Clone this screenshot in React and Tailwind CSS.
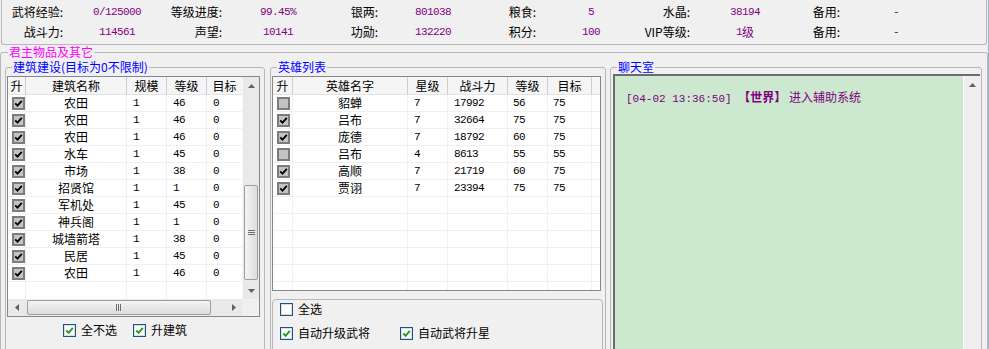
import React from "react";

const mono = "font-['Liberation_Mono',monospace] text-[11px] tracking-[-0.6px]";

const stats = [
  ["武将经验:", "0/125000"],
  ["等级进度:", "99.45%"],
  ["银两:", "801038"],
  ["粮食:", "5"],
  ["水晶:", "38194"],
  ["备用:", "-"],
  ["战斗力:", "114561"],
  ["声望:", "10141"],
  ["功勋:", "132220"],
  ["积分:", "100"],
  ["VIP等级:", "1级"],
  ["备用:", "-"],
];

const buildings = [
  ["农田", 1, 46, 0],
  ["农田", 1, 46, 0],
  ["农田", 1, 46, 0],
  ["水车", 1, 45, 0],
  ["市场", 1, 38, 0],
  ["招贤馆", 1, 1, 0],
  ["军机处", 1, 45, 0],
  ["神兵阁", 1, 1, 0],
  ["城墙箭塔", 1, 38, 0],
  ["民居", 1, 45, 0],
  ["农田", 1, 46, 0],
];

const heroes = [
  { on: false, name: "貂蝉", star: 7, power: 17992, lv: 56, goal: 75 },
  { on: true, name: "吕布", star: 7, power: 32664, lv: 75, goal: 75 },
  { on: true, name: "庞德", star: 7, power: 18792, lv: 60, goal: 75 },
  { on: false, name: "吕布", star: 4, power: 8613, lv: 55, goal: 55 },
  { on: true, name: "高顺", star: 7, power: 21719, lv: 60, goal: 75 },
  { on: true, name: "贾诩", star: 7, power: 23394, lv: 75, goal: 75 },
];

function Tri({ dir }) {
  if (dir === "up")
    return (
      <svg width="7" height="4" viewBox="0 0 7 4">
        <path d="M0 4L3.5 0L7 4Z" fill="#606060" />
      </svg>
    );
  if (dir === "down")
    return (
      <svg width="7" height="4" viewBox="0 0 7 4">
        <path d="M0 0L7 0L3.5 4Z" fill="#606060" />
      </svg>
    );
  if (dir === "left")
    return (
      <svg width="4" height="7" viewBox="0 0 4 7">
        <path d="M4 0L4 7L0 3.5Z" fill="#606060" />
      </svg>
    );
  return (
    <svg width="4" height="7" viewBox="0 0 4 7">
      <path d="M0 0L4 3.5L0 7Z" fill="#606060" />
    </svg>
  );
}

// list-view checkbox (grey style)
function ListCheck({ checked }) {
  return (
    <span className="flex h-[13px] w-[13px] items-center justify-center border-2 border-[#7c7c7c] bg-[#c3c3c3]">
      {checked && (
        <svg width="9" height="9" viewBox="0 0 9 9">
          <path d="M1.2 4.3L3.5 6.6L7.8 1.8" fill="none" stroke="#000" strokeWidth="1.8" />
        </svg>
      )}
    </span>
  );
}

function FormCheck({ checked, label, className = "" }) {
  return (
    <label className={`flex items-center gap-[5px] ${className}`}>
      <span className="flex h-[13px] w-[13px] items-center justify-center border border-[#1d5284] bg-white shadow-[inset_0_0_0_1px_#dcdcdc]">
        {checked && (
          <svg width="9" height="9" viewBox="0 0 9 9">
            <path d="M1.3 4.5L3.6 6.8L7.8 1.8" fill="none" stroke="#20a020" strokeWidth="2" />
          </svg>
        )}
      </span>
      <span>{label}</span>
    </label>
  );
}

function LeftTable() {
  return (
    <div className="ml-[1px] mt-[2px] w-[253px] border border-[#828790] bg-white">
      <div className="flex h-[222px]">
        <div className="flex-1 overflow-hidden">
          <div className="flex h-[18px] border-b border-[#e3e3e3] bg-[#f5f5f5]">
            <div className="flex w-[18px] items-center justify-center border-r border-[#cdcdcd]">升</div>
            <div className="flex w-[101px] items-center justify-center border-r border-[#cdcdcd]">建筑名称</div>
            <div className="flex w-[40px] items-center justify-center border-r border-[#cdcdcd]">规模</div>
            <div className="flex w-[40px] items-center justify-center border-r border-[#cdcdcd]">等级</div>
            <div className="flex flex-1 items-center justify-center">目标</div>
          </div>
          {buildings.map((b, i) => (
            <div key={i} className="flex h-[17px] border-b border-[#f0f0f0]">
              <div className="flex w-[18px] items-center border-r border-[#f0f0f0] pl-[4px]">
                <ListCheck checked />
              </div>
              <div className="flex w-[101px] items-center justify-center border-r border-[#f0f0f0]">{b[0]}</div>
              <div className={`flex w-[40px] items-center border-r border-[#f0f0f0] pl-[6px] ${mono}`}>{b[1]}</div>
              <div className={`flex w-[40px] items-center border-r border-[#f0f0f0] pl-[6px] ${mono}`}>{b[2]}</div>
              <div className={`flex flex-1 items-center pl-[6px] ${mono}`}>{b[3]}</div>
            </div>
          ))}
          <div className="flex h-[17px]">
            <div className="w-[18px] border-r border-[#f0f0f0]" />
            <div className="w-[101px] border-r border-[#f0f0f0]" />
            <div className="w-[40px] border-r border-[#f0f0f0]" />
            <div className="w-[40px] border-r border-[#f0f0f0]" />
          </div>
        </div>
        {/* vertical scrollbar */}
        <div className="flex w-[17px] flex-col border-l border-[#f7f7f7] bg-[#e9e9e9]">
          <div className="flex h-[17px] items-center justify-center">
            <Tri dir="up" />
          </div>
          <div className="h-[91px]" />
          <div className="mx-auto flex h-[95px] w-[14px] items-center justify-center rounded-[2px] border border-[#9e9e9e] bg-linear-to-r from-[#f4f4f4] to-[#dcdcdc]">
            <svg width="7" height="6" viewBox="0 0 7 6">
              <path d="M0 0.5H7M0 2.5H7M0 4.5H7" stroke="#6e6e6e" strokeWidth="1" />
            </svg>
          </div>
          <div className="flex-1" />
          <div className="flex h-[17px] items-center justify-center">
            <Tri dir="down" />
          </div>
        </div>
      </div>
      <div className="flex h-[17px]">
        <div className="flex flex-1 items-center bg-[#e9e9e9]">
          <div className="flex w-[17px] justify-center">
            <Tri dir="left" />
          </div>
          <div className="w-[2px]" />
          <div className="flex h-[15px] w-[184px] items-center justify-center rounded-[2px] border border-[#9e9e9e] bg-linear-to-b from-[#f4f4f4] to-[#dcdcdc]">
            <svg width="6" height="7" viewBox="0 0 6 7">
              <path d="M0.5 0V7M2.5 0V7M4.5 0V7" stroke="#6e6e6e" strokeWidth="1" />
            </svg>
          </div>
          <div className="flex-1" />
          <div className="flex w-[17px] justify-center">
            <Tri dir="right" />
          </div>
        </div>
        <div className="w-[17px] bg-[#f0f0f0]" />
      </div>
    </div>
  );
}

function HeroTable() {
  const rows = [...heroes, ...Array(6).fill(null)];
  return (
    <div className="ml-[1px] mt-[2px] h-[215px] w-[329px] overflow-hidden border border-[#828790] bg-white">
      <div className="flex h-[18px] border-b border-[#e3e3e3] bg-[#f5f5f5]">
        <div className="flex w-[20px] items-center justify-center border-r border-[#cdcdcd]">升</div>
        <div className="flex w-[115px] items-center justify-center border-r border-[#cdcdcd]">英雄名字</div>
        <div className="flex w-[40px] items-center justify-center border-r border-[#cdcdcd]">星级</div>
        <div className="flex w-[60px] items-center justify-center border-r border-[#cdcdcd]">战斗力</div>
        <div className="flex w-[40px] items-center justify-center border-r border-[#cdcdcd]">等级</div>
        <div className="flex w-[44px] items-center justify-center border-r border-[#cdcdcd]">目标</div>
        <div className="flex-1" />
      </div>
      {rows.map((h, i) => (
        <div key={i} className="flex h-[17px] border-b border-[#f0f0f0]">
          <div className="flex w-[20px] items-center border-r border-[#f0f0f0] pl-[4px]">
            {h && <ListCheck checked={h.on} />}
          </div>
          <div className="flex w-[115px] items-center justify-center border-r border-[#f0f0f0]">{h && h.name}</div>
          <div className={`flex w-[40px] items-center border-r border-[#f0f0f0] pl-[6px] ${mono}`}>{h && h.star}</div>
          <div className={`flex w-[60px] items-center border-r border-[#f0f0f0] pl-[6px] ${mono}`}>{h && h.power}</div>
          <div className={`flex w-[40px] items-center border-r border-[#f0f0f0] pl-[5px] ${mono}`}>{h && h.lv}</div>
          <div className={`flex w-[44px] items-center border-r border-[#f0f0f0] pl-[5px] ${mono}`}>{h && h.goal}</div>
          <div className="flex-1" />
        </div>
      ))}
    </div>
  );
}

export default function App() {
  return (
    <div className="h-[349px] w-[989px] overflow-hidden border-r border-[#9fb1c2] bg-[#f0f0f0] font-['Noto_Sans_CJK_SC',sans-serif] text-[12px] leading-[14px] text-black">
      {/* 顶部属性 */}
      <div className="ml-[1px] h-[45px] w-[986px] rounded-b-[3px] border-x border-b border-[#b7b7b7] pt-[2px]">
        <div className="grid grid-cols-[61px_108px_51px_112px_44px_110px_48px_110px_44px_110px_40px_112px] grid-rows-[20px_20px]">
          {stats.map(([label, val], i) => (
            <React.Fragment key={i}>
              <div className="flex items-center justify-end whitespace-nowrap">{label}</div>
              <div className="flex items-center justify-center whitespace-nowrap text-[#800080]">
                {val === "1级" ? (
                  <>
                    <span className={mono}>1</span>
                    <span>级</span>
                  </>
                ) : (
                  <span className={mono}>{val}</span>
                )}
              </div>
            </React.Fragment>
          ))}
        </div>
      </div>

      <fieldset className="h-[320px] w-[988px] rounded-[3px] border border-[#b7b7b7] px-[4px]">
        <legend className="ml-[3px] px-[1px] text-[#ff00ff]">君主物品及其它</legend>
        <div className="mt-[1px] flex">
          {/* 建筑建设 */}
          <fieldset className="h-[300px] w-[260px] rounded-[3px] border border-[#b7b7b7]">
            <legend className="ml-[6px] px-[1px] text-[#0000ff]">建筑建设(目标为0不限制)</legend>
            <LeftTable />
            <div className="mt-[6px] flex items-center pl-[57px]">
              <FormCheck checked label="全不选" />
              <FormCheck checked label="升建筑" className="ml-[16px]" />
            </div>
          </fieldset>

          {/* 英雄列表 */}
          <fieldset className="ml-[5px] h-[300px] w-[336px] rounded-[3px] border border-[#b7b7b7]">
            <legend className="ml-[6px] px-[1px] text-[#0000ff]">英雄列表</legend>
            <HeroTable />
            <div className="ml-[1px] mt-[8px] h-[60px] w-[331px] rounded-[4px] border border-[#b7b7b7] pl-[7px] pt-[2px]">
              <FormCheck label="全选" />
              <div className="mt-[10px] flex">
                <FormCheck checked label="自动升级武将" className="w-[120px]" />
                <FormCheck checked label="自动武将升星" />
              </div>
            </div>
          </fieldset>

          {/* 聊天室 */}
          <fieldset className="ml-[4px] h-[300px] w-[372px] rounded-[3px] border border-[#b7b7b7]">
            <legend className="ml-[6px] px-[1px] text-[#0000ff]">聊天室</legend>
            <div className="ml-[2px] flex h-[290px] w-[367px] border-l-2 border-t-2 border-[#6b6b6b]">
              <div className="flex-1 bg-[#cce8cf] pl-[11px] pt-[14px] text-[#800080]">
                <span className="font-['Liberation_Mono',monospace] text-[11px]">[04-02 13:36:50] </span>
                <span className="font-bold">【世界】</span>
                <span> 进入辅助系统</span>
              </div>
              <div className="flex w-[17px] flex-col items-center border-l border-white bg-[#eeeeee]">
                <div className="flex h-[17px] items-center justify-center">
                  <Tri dir="up" />
                </div>
              </div>
            </div>
          </fieldset>
        </div>
      </fieldset>
    </div>
  );
}
